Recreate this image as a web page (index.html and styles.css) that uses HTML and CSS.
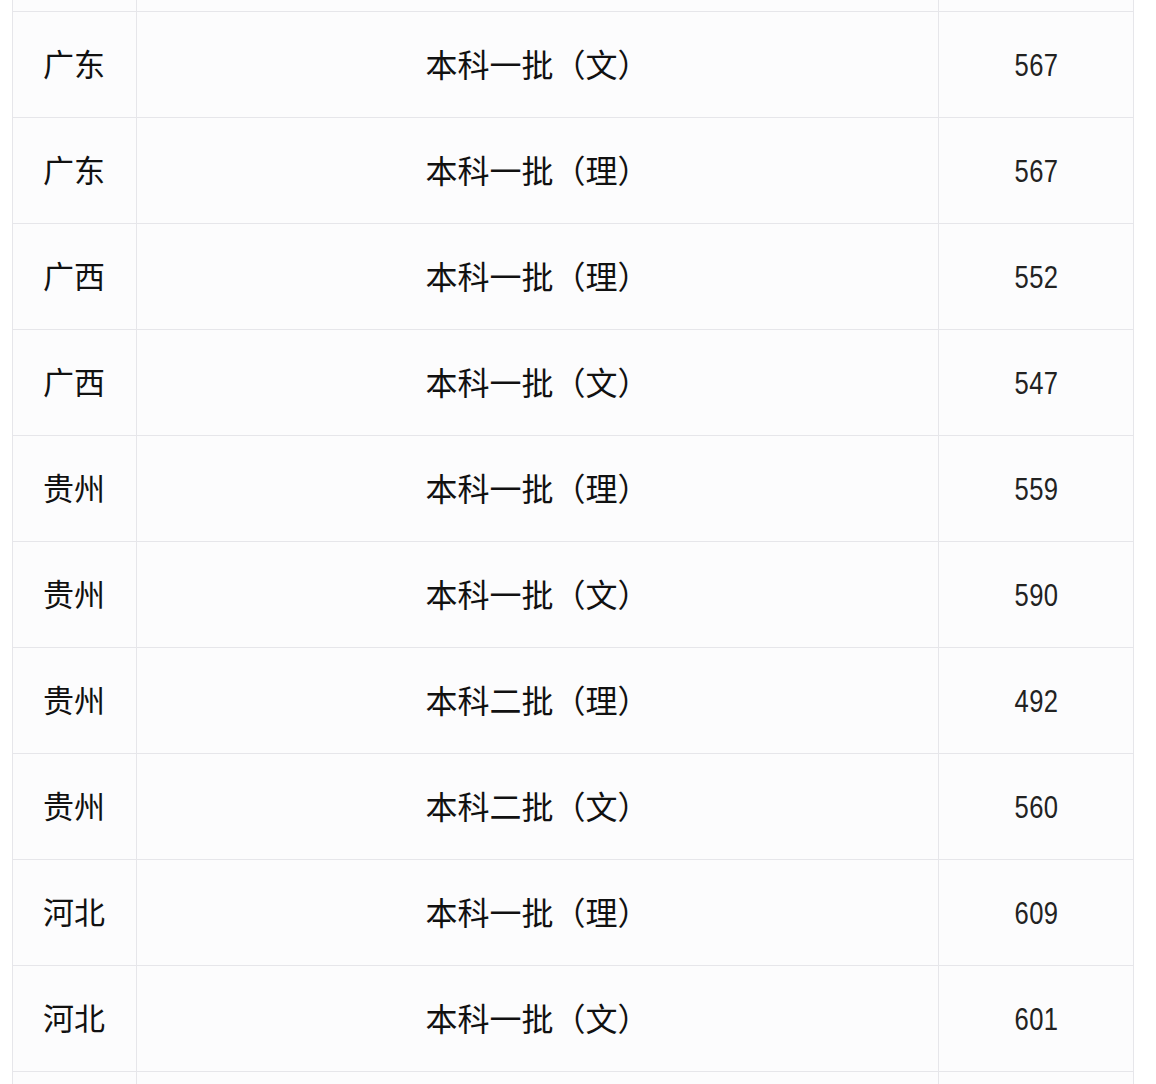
FILE: index.html
```html
<!DOCTYPE html>
<html lang="zh-CN">
<head>
<meta charset="utf-8">
<link rel="stylesheet" href="styles.css">
</head>
<body>
<div class="page">
<table class="scores">
<colgroup><col class="c1"><col class="c2"><col class="c3"></colgroup>
<tbody>
<tr class="edge-top"><td></td><td></td><td></td></tr>
<tr><td class="prov">广东</td><td class="batch">本科一批（文）</td><td class="num"><span>567</span></td></tr>
<tr><td class="prov">广东</td><td class="batch">本科一批（理）</td><td class="num"><span>567</span></td></tr>
<tr><td class="prov">广西</td><td class="batch">本科一批（理）</td><td class="num"><span>552</span></td></tr>
<tr><td class="prov">广西</td><td class="batch">本科一批（文）</td><td class="num"><span>547</span></td></tr>
<tr><td class="prov">贵州</td><td class="batch">本科一批（理）</td><td class="num"><span>559</span></td></tr>
<tr><td class="prov">贵州</td><td class="batch">本科一批（文）</td><td class="num"><span>590</span></td></tr>
<tr><td class="prov">贵州</td><td class="batch">本科二批（理）</td><td class="num"><span>492</span></td></tr>
<tr><td class="prov">贵州</td><td class="batch">本科二批（文）</td><td class="num"><span>560</span></td></tr>
<tr><td class="prov">河北</td><td class="batch">本科一批（理）</td><td class="num"><span>609</span></td></tr>
<tr><td class="prov">河北</td><td class="batch">本科一批（文）</td><td class="num"><span>601</span></td></tr>
<tr class="edge-bottom"><td></td><td></td><td></td></tr>
</tbody>
</table>
</div>
</body>
</html>
```

FILE: styles.css
```css
html, body {
  margin: 0;
  padding: 0;
  background: #ffffff;
}
.page {
  padding-left: 12px;
  height: 1084px;
  overflow: hidden;
}
.scores {
  border-collapse: collapse;
  table-layout: fixed;
  width: 1121px;
  background: #fcfcfd;
  font-family: "Noto Sans CJK SC", sans-serif;
  font-weight: 400;
  color: #111;
  text-spacing-trim: space-all;
  font-kerning: none;
}
.c1 { width: 124px; }
.c2 { width: 802px; }
.c3 { width: 195px; }
.scores td {
  border: 1px solid #e6e6ea;
  height: 106px;
  padding: 0 0 3px 0;
  vertical-align: middle;
  font-size: 31px;
  line-height: 1;
  box-sizing: border-box;
}
.scores tr.edge-top td {
  border-top: none;
  height: 11px;
  padding: 0;
}
.scores tr.edge-bottom td {
  height: 20px;
  padding: 0;
}
.prov {
  padding-left: 30px !important;
  text-align: left;
}
.batch {
  text-align: center;
  font-size: 32px !important;
}
.num {
  text-align: center;
  font-family: "Liberation Sans", sans-serif;
  font-weight: 400;
  font-size: 32px !important;
  color: #222;
  padding-top: 2px !important;
  padding-left: 0 !important;
  padding-bottom: 0 !important;
}
.num span {
  display: inline-block;
  transform: scaleX(0.8);
  letter-spacing: 0.5px;
}
```
